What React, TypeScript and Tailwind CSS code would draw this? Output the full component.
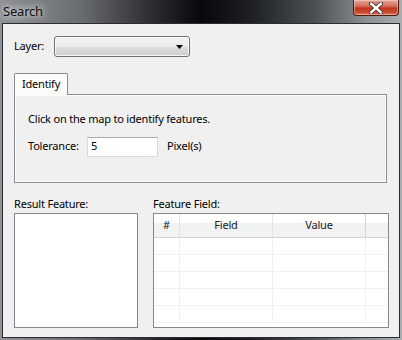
import React from "react";

const font = { fontFamily: '"Noto Sans", "Liberation Sans", sans-serif' };

function CloseButton() {
  return (
    <div className="absolute right-[3px] top-0 flex h-[16px] w-[46px] items-center justify-center rounded-b-[4px] border border-t-0 border-[#4a1b12] bg-[linear-gradient(to_bottom,#e7a697_0%,#d4705b_40%,#c2391f_55%,#c8452b_80%,#e07a5c_100%)] shadow-[inset_0_0_0_1px_rgba(255,255,255,0.35)]">
      <svg width="14" height="12" viewBox="0 0 14 12">
        <path d="M2 1.5 L12 10.5 M12 1.5 L2 10.5" stroke="#3a2a26" strokeWidth="4.2" strokeLinecap="round" />
        <path d="M2 1.5 L12 10.5 M12 1.5 L2 10.5" stroke="#ffffff" strokeWidth="2.4" strokeLinecap="round" />
      </svg>
    </div>
  );
}

function Combo() {
  return (
    <div className="flex h-[21px] w-[136px] items-center justify-end rounded-[3px] border border-[#707070] bg-[linear-gradient(to_bottom,#f2f2f2_0%,#ebebeb_50%,#dddddd_51%,#cfcfcf_100%)] pr-[5px] shadow-[inset_0_0_0_1px_rgba(255,255,255,0.8)]">
      <svg width="8" height="4" viewBox="0 0 8 4">
        <path d="M0 0 H7 L3.5 4 Z" fill="#000" />
      </svg>
    </div>
  );
}

function FieldTable() {
  const cols = ["w-[26px]", "w-[93px]", "w-[93px]", "flex-1"];
  const rows = [0, 1, 2, 3, 4];
  return (
    <div className="flex h-[115px] w-[236px] flex-col overflow-hidden border border-[#828790] bg-white">
      <div className="flex h-[24px] border-b border-[#d5d5d5] bg-[linear-gradient(to_bottom,#ffffff_0%,#ffffff_40%,#f1f2f4_41%,#f1f2f4_100%)] text-[#1a1a1a]">
        <div className="flex w-[26px] items-center justify-center border-r border-[#e3e4e6]">#</div>
        <div className="flex w-[93px] items-center justify-center border-r border-[#e3e4e6]">Field</div>
        <div className="flex w-[93px] items-center justify-center border-r border-[#d5d5d5]">Value</div>
        <div className="flex-1" />
      </div>
      {rows.map((r) => (
        <div key={r} className="flex h-[17px] border-b border-[#f0f0f0]">
          {cols.map((c, i) => (
            <div key={i} className={`${c} ${i < 3 ? "border-r border-[#f0f0f0]" : ""}`} />
          ))}
        </div>
      ))}
    </div>
  );
}

export default function App() {
  return (
    <div
      className="relative flex h-[340px] w-[402px] flex-col bg-[linear-gradient(to_right,#8e9296_0%,#6a6d70_20%,#2a2c2f_38%,#07080a_50%,#1c1f22_62%,#4a4f52_78%,#8d9396_92%,#a9aeb0_100%)] text-[11px] tracking-[-0.2px] text-[#000]"
      style={font}
    >
      <div className="flex h-[23px] items-center pl-[3px]">
        <span className="text-[13px] tracking-[-0.2px] text-[#101010] [text-shadow:0_0_6px_rgba(255,255,255,0.9),0_0_10px_rgba(255,255,255,0.7)]">Search</span>
      </div>
      <CloseButton />
      <div className="mx-[2px] mb-[2px] flex flex-1 flex-col border border-[#2a2d30] bg-[#f0f0f0] px-[11px]">
        <div className="mt-[12px] flex h-[21px] items-center">
          <span className="w-[40px]">Layer:</span>
          <Combo />
        </div>
        <div className="mt-[16px] flex">
          <div className="relative z-10 -mb-px flex h-[22px] w-[54px] items-center justify-center rounded-t-[2px] border border-b-0 border-[#898c95] bg-[#fcfcfc]">
            Identify
          </div>
        </div>
        <div className="flex h-[89px] w-[373px] flex-col border border-[#898c95] bg-[#f0f0f0] px-[13px] shadow-[inset_0_0_0_1px_#ffffff]">
          <div className="mt-[16px]">Click on the map to identify features.</div>
          <div className="mt-[9px] flex items-center">
            <span className="w-[59px]">Tolerance:</span>
            <div className="flex h-[20px] w-[71px] items-center border border-[#d6dbe3] border-t-[#abadb3] bg-white pl-[3px]">5</div>
            <span className="ml-[9px]">Pixel(s)</span>
          </div>
        </div>
        <div className="mt-[13px] flex gap-[15px]">
          <div className="flex flex-col">
            <span className="mb-[1px] leading-[16px]">Result Feature:</span>
            <div className="h-[115px] w-[124px] border border-[#828790] bg-white" />
          </div>
          <div className="flex flex-col">
            <span className="mb-[1px] leading-[16px]">Feature Field:</span>
            <FieldTable />
          </div>
        </div>
      </div>
    </div>
  );
}
